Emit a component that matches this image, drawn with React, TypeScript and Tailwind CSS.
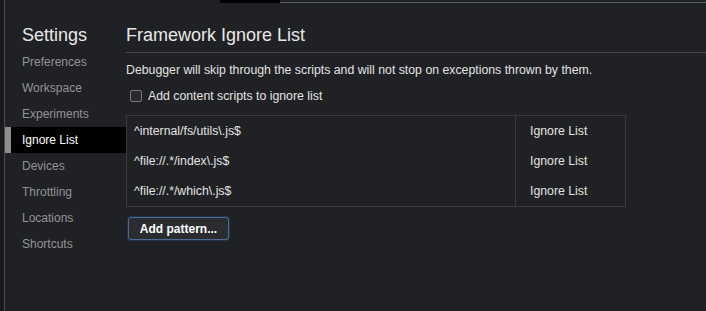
const navItems = [
  "Preferences",
  "Workspace",
  "Experiments",
  "Ignore List",
  "Devices",
  "Throttling",
  "Locations",
  "Shortcuts",
]

const patterns = ["^internal/fs/utils\\.js$", "^file://.*/index\\.js$", "^file://.*/which\\.js$"]

export default function App() {
  return (
    <div className="w-[706px] h-[311px] overflow-hidden bg-[#202124] flex font-['Liberation_Sans',Arial,sans-serif] text-[#e3e3e3]">
      {/* window edge */}
      <div className="w-[4px] bg-[#1a1a1c]" />
      <div className="w-px bg-[#4b4c50]" />

      <div className="flex-1 flex flex-col">
        <div className="h-[3px] flex">
          <div className="w-[215px]" />
          <div className="w-[60px] bg-black" />
          <div className="flex-1 border-b border-[#5a5d61]" />
        </div>

        <div className="flex flex-1">
          {/* sidebar */}
          <div className="w-[121px] pt-[19px]">
            <h1 className="h-[27px] pl-[17px] text-[18px] leading-[26px] text-[#e8e8e8]">Settings</h1>
            <ul>
              {navItems.map((item) =>
                item === "Ignore List" ? (
                  <li key={item} className="h-[26px] flex items-center bg-black text-[12px] text-white">
                    <span className="w-[6px] h-full bg-[#8d8d8f]" />
                    <span className="pl-[11px]">{item}</span>
                  </li>
                ) : (
                  <li key={item} className="h-[26px] flex items-center pl-[17px] text-[12px] text-[#939395]">
                    {item}
                  </li>
                )
              )}
            </ul>
          </div>

          {/* main */}
          <div className="flex-1 pt-[19px] text-[12.3px]">
            <h2 className="text-[18px] leading-[26px] pb-[4px] border-b border-[#4a4c50] text-[#e8e8e8]">
              Framework Ignore List
            </h2>
            <p className="mt-[10px] leading-[14px]">
              Debugger will skip through the scripts and will not stop on exceptions thrown by them.
            </p>
            <label className="mt-[12px] flex items-center h-[14px] leading-[14px]">
              <span className="ml-[4px] w-[12px] h-[12px] rounded-[2px] border border-[#77787b] bg-[#2a2b2e]" />
              <span className="ml-[6px]">Add content scripts to ignore list</span>
            </label>

            <div className="mt-[12px] w-[500px] flex border border-[#3a3b3e]">
              <div className="w-[389px] border-r border-[#3a3b3e]">
                {patterns.map((p) => (
                  <div key={p} className="h-[30px] flex items-center pl-[7px]">
                    {p}
                  </div>
                ))}
              </div>
              <div className="flex-1">
                {patterns.map((p) => (
                  <div key={p} className="h-[30px] flex items-center pl-[14px]">
                    Ignore List
                  </div>
                ))}
              </div>
            </div>

            <button className="mt-[10px] ml-[2px] h-[23px] w-[101px] rounded-[3px] border border-[#4d6c94] bg-[#2b2c30] shadow-[0_0_0_1px_#1e3350] text-[12px] font-bold text-white">
              Add pattern...
            </button>
          </div>
        </div>
      </div>
    </div>
  )
}
